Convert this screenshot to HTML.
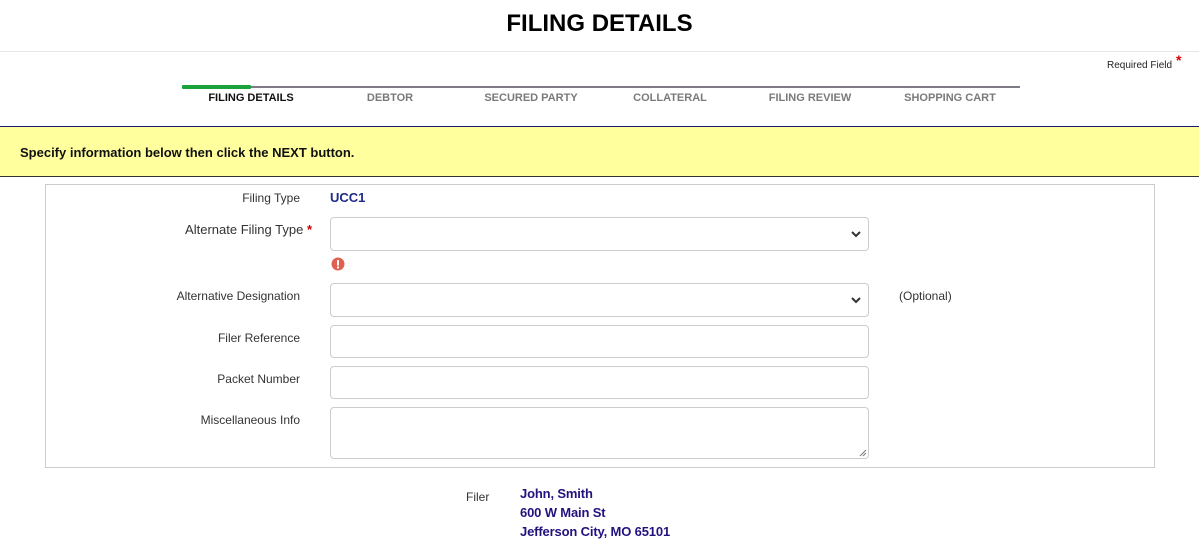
<!DOCTYPE html>
<html><head><style>
body{margin:0;width:1199px;height:550px;background:#fff;font-family:"Liberation Sans",Arial,sans-serif;position:relative;overflow:hidden;color:#333}
.a{position:absolute}
h1{position:absolute;margin:0;left:0;width:1199px;top:10px;text-align:center;font-size:24px;font-weight:bold;color:#000}
.step{position:absolute;top:92px;font-size:11px;font-weight:bold;color:#7a7a7a;transform:translateX(-50%);white-space:nowrap}
.lbl{position:absolute;right:899px;font-size:12px;color:#333;text-align:right;white-space:nowrap}
.in{position:absolute;left:330px;width:537px;border:1px solid #ccc;border-radius:4px;background:#fff}
.chev{position:absolute;right:7px;top:50%;margin-top:-4px}
.v{position:absolute;left:520px;font-size:13px;font-weight:bold;color:#22127e;letter-spacing:-0.15px}
</style></head><body>
<h1>FILING DETAILS</h1>
<div class="a" style="left:0;top:51px;width:1199px;height:1px;background:#e6e6e6"></div>
<div class="a" style="left:1107px;top:60px;font-size:10px;color:#222">Required Field</div>
<div class="a" style="left:1176px;top:52px;font-size:14px;color:#d00;font-weight:bold">*</div>
<div class="a" style="left:182px;top:86px;width:838px;height:2px;background:#7f7a85"></div>
<div class="a" style="left:182px;top:85px;width:69px;height:4px;background:#1aa33a;border-radius:1px"></div>
<div class="step" style="left:251px;color:#111">FILING DETAILS</div>
<div class="step" style="left:390px">DEBTOR</div>
<div class="step" style="left:531px">SECURED PARTY</div>
<div class="step" style="left:670px">COLLATERAL</div>
<div class="step" style="left:810px">FILING REVIEW</div>
<div class="step" style="left:950px">SHOPPING CART</div>
<div class="a" style="left:0;top:126px;width:1199px;height:49px;background:#ffff9e;border-top:1px solid #1a1a6e;border-bottom:1px solid #333"></div>
<div class="a" style="left:20px;top:145px;font-size:13px;font-weight:bold;color:#111">Specify information below then click the NEXT button.</div>
<div class="a" style="left:45px;top:184px;width:1108px;height:282px;border:1px solid #ccc"></div>
<div class="lbl" style="top:191px">Filing Type</div>
<div class="a" style="left:330px;top:190px;font-size:13px;font-weight:bold;color:#1f2a8a">UCC1</div>
<div class="lbl" style="top:222px;font-size:13px;right:887px">Alternate Filing Type <span style="color:#c00;font-weight:bold">*</span></div>
<div class="in" style="top:217px;height:32px"><svg class="chev" width="10" height="8" viewBox="0 0 10 8"><path d="M1 2l4 4 4-4" stroke="#333" stroke-width="2" fill="none"/></svg></div>
<svg class="a" style="left:331px;top:257px" width="14" height="14"><circle cx="7" cy="7" r="6.5" fill="#e0614f"/><rect x="6" y="3" width="2" height="5.5" fill="#fff"/><rect x="6" y="9.5" width="2" height="2" fill="#fff"/></svg>
<div class="lbl" style="top:289px">Alternative Designation</div>
<div class="in" style="top:283px;height:32px"><svg class="chev" width="10" height="8" viewBox="0 0 10 8"><path d="M1 2l4 4 4-4" stroke="#333" stroke-width="2" fill="none"/></svg></div>
<div class="a" style="left:899px;top:289px;font-size:12px;color:#333">(Optional)</div>
<div class="lbl" style="top:331px">Filer Reference</div>
<div class="in" style="top:325px;height:31px"></div>
<div class="lbl" style="top:372px">Packet Number</div>
<div class="in" style="top:366px;height:31px"></div>
<div class="lbl" style="top:413px">Miscellaneous Info</div>
<div class="in" style="top:407px;height:50px"><svg class="a" style="right:1px;bottom:1px" width="8" height="8"><path d="M7 1L1 7M7 4L4 7" stroke="#777" stroke-width="1"/></svg></div>
<div class="a" style="left:466px;top:490px;font-size:12px;color:#333">Filer</div>
<div class="v" style="top:486px">John, Smith</div>
<div class="v" style="top:505px">600 W Main St</div>
<div class="v" style="top:524px">Jefferson City, MO 65101</div>
</body></html>
